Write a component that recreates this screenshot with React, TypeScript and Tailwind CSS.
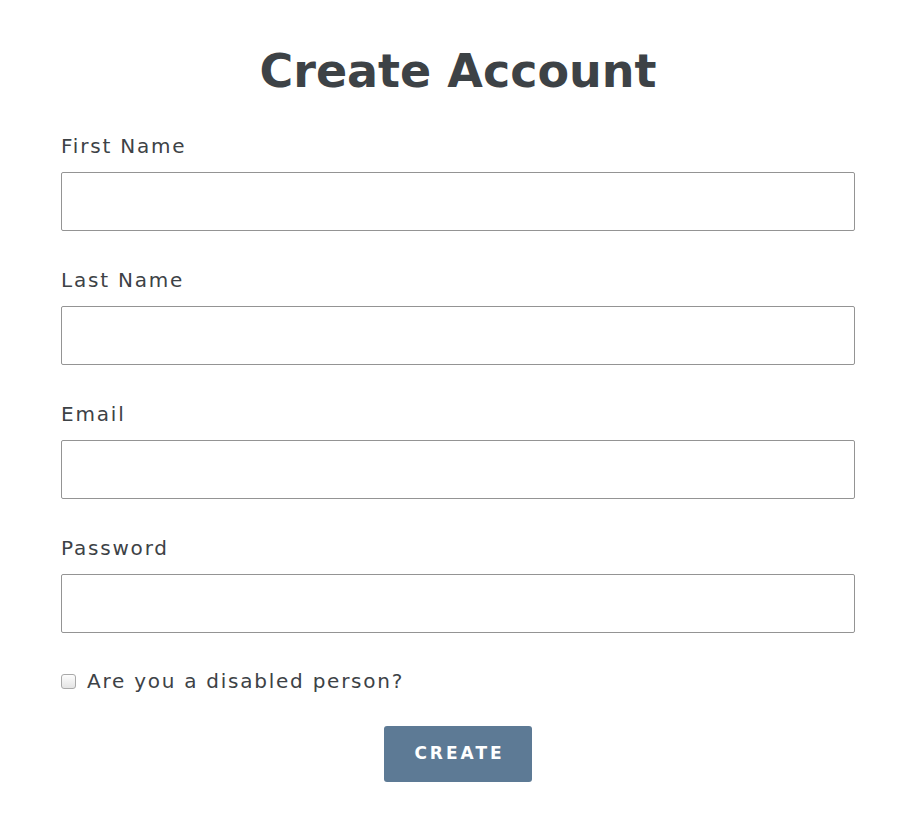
import { useState } from 'react';

const fields = [
  { id: 'first', label: 'First Name', type: 'text' },
  { id: 'last', label: 'Last Name', type: 'text' },
  { id: 'email', label: 'Email', type: 'email' },
  { id: 'password', label: 'Password', type: 'password' },
];

export default function App() {
  const [disabled, setDisabled] = useState(false);

  return (
    <div className="min-h-screen bg-white px-[61px] text-[#3d4246] [font-family:'DejaVu_Sans',sans-serif]">
      <h1 className="pt-[41px] text-center text-[46px] font-bold leading-[60px]">
        Create Account
      </h1>

      <form className="mt-[33px]" onSubmit={e => e.preventDefault()}>
        {fields.map(f => (
          <div key={f.id} className="mb-[37px]">
            <label htmlFor={f.id} className="block text-[20px] leading-[24px] tracking-[1.8px]">
              {f.label}
            </label>
            <input
              id={f.id}
              type={f.type}
              className="mt-[14px] block h-[59px] w-full rounded-[2px] border border-[#949494] bg-white px-4 outline-none"
            />
          </div>
        ))}

        {/* Checkbox row */}
        <label className="-mt-px flex cursor-pointer items-center text-[20px] leading-[24px] tracking-[1.75px]">
          <input
            type="checkbox"
            checked={disabled}
            onChange={e => setDisabled(e.target.checked)}
            className="sr-only"
          />
          <span className="mr-[11px] h-[15px] w-[15px] rounded-[3px] border border-[#a9a9a9] bg-gradient-to-b from-[#fdfdfd] to-[#e4e4e4]" />
          Are you a disabled person?
        </label>

        <div className="mt-[33px] flex justify-center">
          <button
            type="submit"
            className="h-[56px] w-[148px] rounded-[3px] bg-[#5d7a95] pl-[3px] text-[17px] font-bold tracking-[3px] text-white"
          >
            CREATE
          </button>
        </div>
      </form>
    </div>
  );
}
